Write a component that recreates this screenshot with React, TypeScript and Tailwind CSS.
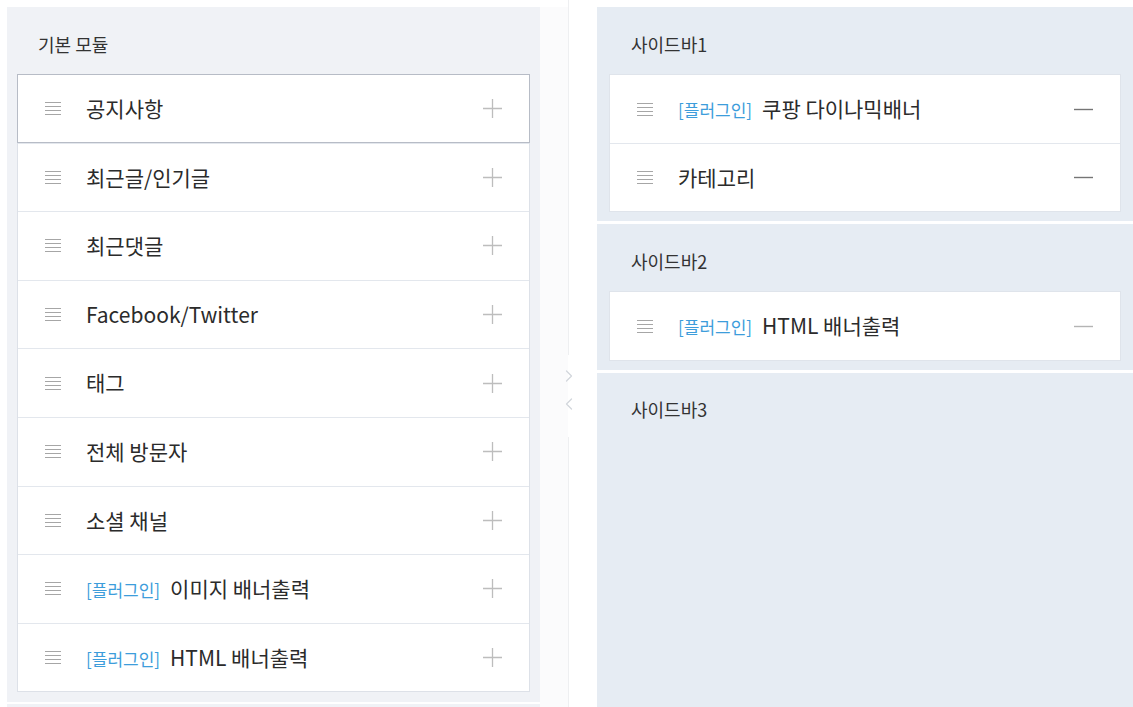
import { ChevronLeft, ChevronRight } from 'lucide-react';

interface Module {
  name: string;
  plugin?: boolean;
}

const baseModules: Module[] = [
  { name: '공지사항' },
  { name: '최근글/인기글' },
  { name: '최근댓글' },
  { name: 'Facebook/Twitter' },
  { name: '태그' },
  { name: '전체 방문자' },
  { name: '소셜 채널' },
  { name: '이미지 배너출력', plugin: true },
  { name: 'HTML 배너출력', plugin: true },
];

const sidebars: { title: string; items: Module[] }[] = [
  {
    title: '사이드바1',
    items: [
      { name: '쿠팡 다이나믹배너', plugin: true },
      { name: '카테고리' },
    ],
  },
  { title: '사이드바2', items: [{ name: 'HTML 배너출력', plugin: true }] },
];

function Handle() {
  return (
    <div className="flex w-4 flex-col gap-[3px]">
      <span className="h-px bg-[#a6a6a6]" />
      <span className="h-px bg-[#a6a6a6]" />
      <span className="h-px bg-[#a6a6a6]" />
      <span className="h-px bg-[#a6a6a6]" />
    </div>
  );
}

function PlusIcon() {
  return (
    <svg width="19" height="19" viewBox="0 0 19 19" className="text-[#bdbdbd]">
      <path d="M9.5 0v19M0 9.5h19" stroke="currentColor" strokeWidth="1.3" />
    </svg>
  );
}

function MinusIcon({ light }: { light?: boolean }) {
  return (
    <svg width="19" height="19" viewBox="0 0 19 19" className={light ? 'text-[#b4b4b4]' : 'text-[#757575]'}>
      <path d="M0 9.5h19" stroke="currentColor" strokeWidth="1.4" />
    </svg>
  );
}

function Row({ item, action, hover, tight }: { item: Module; action: React.ReactNode; hover?: boolean; tight?: boolean }) {
  return (
    <div
      className={`flex items-center bg-white px-[27px] ${tight ? 'h-[68px]' : 'h-[68.6px]'} ${
        hover ? 'relative z-10 -mx-px -mt-px border border-[#b7bcc6]' : 'border-t border-[#e3e7ed] first:border-t-0'
      }`}
    >
      <Handle />
      <div className="ml-[25px] flex flex-1 items-baseline text-[21px] text-[#2b2b2b]">
        {item.plugin && <span className="mr-[10px] text-[17px] text-[#3d9ddb]">[플러그인]</span>}
        <span>{item.name}</span>
      </div>
      {action}
    </div>
  );
}

export default function App() {
  return (
    <div
      className="flex h-[707px] overflow-hidden bg-white pl-[7px] pt-[7px]"
      style={{ fontFamily: '"Noto Sans CJK KR", "Noto Sans", sans-serif' }}
    >
      {/* base modules */}
      <div className="flex w-[533px] flex-col gap-[2px]">
        <div className="h-[695px] bg-[#f0f2f6] px-[10px]">
          <h3 className="pl-[21px] pt-[24px] pb-[17px] text-[18px] leading-[26px] text-[#333]">기본 모듈</h3>
          <div className="border border-[#dde1e8] bg-white">
            {baseModules.map((m, i) => (
              <Row key={m.name + i} item={m} hover={i === 0} action={<PlusIcon />} />
            ))}
          </div>
        </div>
        <div className="flex-1 bg-[#f0f2f6]" />
      </div>

      {/* divider */}
      <div className="flex w-[57px] bg-[#fbfbfc]">
        <div className="w-[28px]" />
        <div className="flex w-[29px] flex-col bg-white">
          <div className="h-[355px] w-px bg-[#eeeff1]" style={{ marginTop: -7 }} />
          <div className="-ml-[9px] mt-[11px] flex flex-col text-[#d2d6dc]">
            <ChevronRight size={20} strokeWidth={1.5} />
            <ChevronLeft size={20} strokeWidth={1.5} className="mt-[8px]" />
          </div>
          <div className="mt-[23px] w-px flex-1 bg-[#eeeff1]" />
        </div>
      </div>

      {/* sidebars */}
      <div className="flex flex-1 flex-col gap-[3px]">
        {sidebars.map((s, si) => (
          <div key={s.title} className="bg-[#e6ecf3] px-[12px] pb-[9px]">
            <h3 className="pl-[22px] pt-[24px] pb-[17px] text-[18px] leading-[26px] text-[#333]">{s.title}</h3>
            <div className="border border-[#dfe4eb] bg-white">
              {s.items.map((m) => (
                <Row key={m.name} item={m} tight action={<MinusIcon light={si === 1} />} />
              ))}
            </div>
          </div>
        ))}
        <div className="flex-1 bg-[#e6ecf3] px-[12px]">
          <h3 className="pl-[22px] pt-[23px] text-[18px] leading-[26px] text-[#333]">사이드바3</h3>
        </div>
      </div>
    </div>
  );
}
